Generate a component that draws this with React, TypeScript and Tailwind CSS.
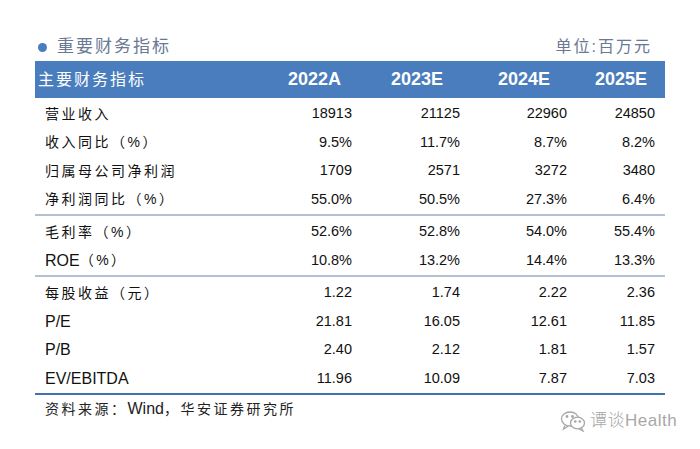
import React from "react";

const CJK = "font-['Liberation_Sans','Noto_Sans_CJK_SC',sans-serif]";

type Row = { label: string; v: string[] };

const g1: Row[] = [
  { label: "营业收入", v: ["18913", "21125", "22960", "24850"] },
  { label: "收入同比（%）", v: ["9.5%", "11.7%", "8.7%", "8.2%"] },
  { label: "归属母公司净利润", v: ["1709", "2571", "3272", "3480"] },
  { label: "净利润同比（%）", v: ["55.0%", "50.5%", "27.3%", "6.4%"] },
];
const g2: Row[] = [
  { label: "毛利率（%）", v: ["52.6%", "52.8%", "54.0%", "55.4%"] },
  { label: "ROE（%）", v: ["10.8%", "13.2%", "14.4%", "13.3%"] },
];
const g3: Row[] = [
  { label: "每股收益（元）", v: ["1.22", "1.74", "2.22", "2.36"] },
  { label: "P/E", v: ["21.81", "16.05", "12.61", "11.85"] },
  { label: "P/B", v: ["2.40", "2.12", "1.81", "1.57"] },
  { label: "EV/EBITDA", v: ["11.96", "10.09", "7.87", "7.03"] },
];

function Label({ text }: { text: string }) {
  const parts = text.split(/([A-Za-z/]+)/).filter(Boolean);
  return (
    <div className="pl-[10px] flex items-center">
      {parts.map((p, i) =>
        /[A-Za-z]/.test(p) ? (
          <span key={i} className="text-[16px]">{p}</span>
        ) : (
          <span key={i} className="text-[14px] tracking-[2.5px]">{p}</span>
        )
      )}
    </div>
  );
}

function DataRow({ r }: { r: Row }) {
  return (
    <div className="grid grid-cols-[210px_107px_108px_107px_88px] h-[28.5px] items-center text-[#111]">
      <Label text={r.label} />
      {r.v.map((x, i) => (
        <div key={i} className="text-right text-[14.5px]">{x}</div>
      ))}
    </div>
  );
}

function Group({ rows }: { rows: Row[] }) {
  return (
    <div className="pt-[2px]">
      {rows.map((r) => (
        <DataRow key={r.label} r={r} />
      ))}
    </div>
  );
}

export default function App() {
  return (
    <div className={`relative w-[700px] h-[449px] bg-white ${CJK}`}>
      <div className="pt-[35px] pl-[35px] w-[665px]">
        <div className="flex items-center justify-between h-[24px] mb-[2px]">
          <div className="flex items-center">
            <span className="w-[9px] h-[9px] rounded-full bg-[#4a7dbd] ml-[3px] mr-[10px]" />
            <span className="text-[17px] tracking-[2px] text-[#6a7894]">重要财务指标</span>
          </div>
          <span className="text-[16px] tracking-[2px] text-[#6a7894] mr-[13px]">单位:百万元</span>
        </div>
        <div className="grid grid-cols-[210px_107px_108px_107px_88px] h-[37px] items-center bg-[#4a7dbd] text-white">
          <div className="pl-[3px] text-[16px] tracking-[2px]">主要财务指标</div>
          <div className="text-right font-bold text-[18px] pr-[11px]">2022A</div>
          <div className="text-right font-bold text-[18px] pr-[17px]">2023E</div>
          <div className="text-right font-bold text-[18px] pr-[17px]">2024E</div>
          <div className="text-right font-bold text-[18px] pr-[8px]">2025E</div>
        </div>
        <Group rows={g1} />
        <div className="h-[2px] bg-[#b3c1d4]" />
        <Group rows={g2} />
        <div className="h-[2px] bg-[#b3c1d4]" />
        <Group rows={g3} />
        <div className="h-[2px] bg-[#4072ae]" />
        <div className="pl-[10px] mt-[4px] h-[20px] flex items-center text-[#222]">
          <span className="text-[14px] tracking-[2.5px]">资料来源：</span>
          <span className="text-[16px]">Wind</span>
          <span className="text-[14px] tracking-[2.5px]">，华安证券研究所</span>
        </div>
      </div>
      <div className="absolute left-[560px] top-[408px] flex items-center gap-[4px] text-[#a8a8a8]">
        <svg width="26" height="22" viewBox="0 0 26 22" fill="none" stroke="#a8a8a8" strokeWidth="1.3">
          <ellipse cx="10" cy="9" rx="8.5" ry="7" />
          <path d="M5 15.5 L3.5 19 L8 16.2" />
          <ellipse cx="17.5" cy="13" rx="7" ry="5.8" fill="white" />
          <path d="M21.5 18.3 L23 21 L19 19" />
          <circle cx="7" cy="6.5" r="0.8" fill="#a8a8a8" />
          <circle cx="12.5" cy="6.5" r="0.8" fill="#a8a8a8" />
          <circle cx="15.3" cy="11.5" r="0.7" fill="#a8a8a8" />
          <circle cx="19.8" cy="11.5" r="0.7" fill="#a8a8a8" />
        </svg>
        <span className="text-[17px] tracking-[0.5px] font-light">谭谈Health</span>
      </div>
    </div>
  );
}
